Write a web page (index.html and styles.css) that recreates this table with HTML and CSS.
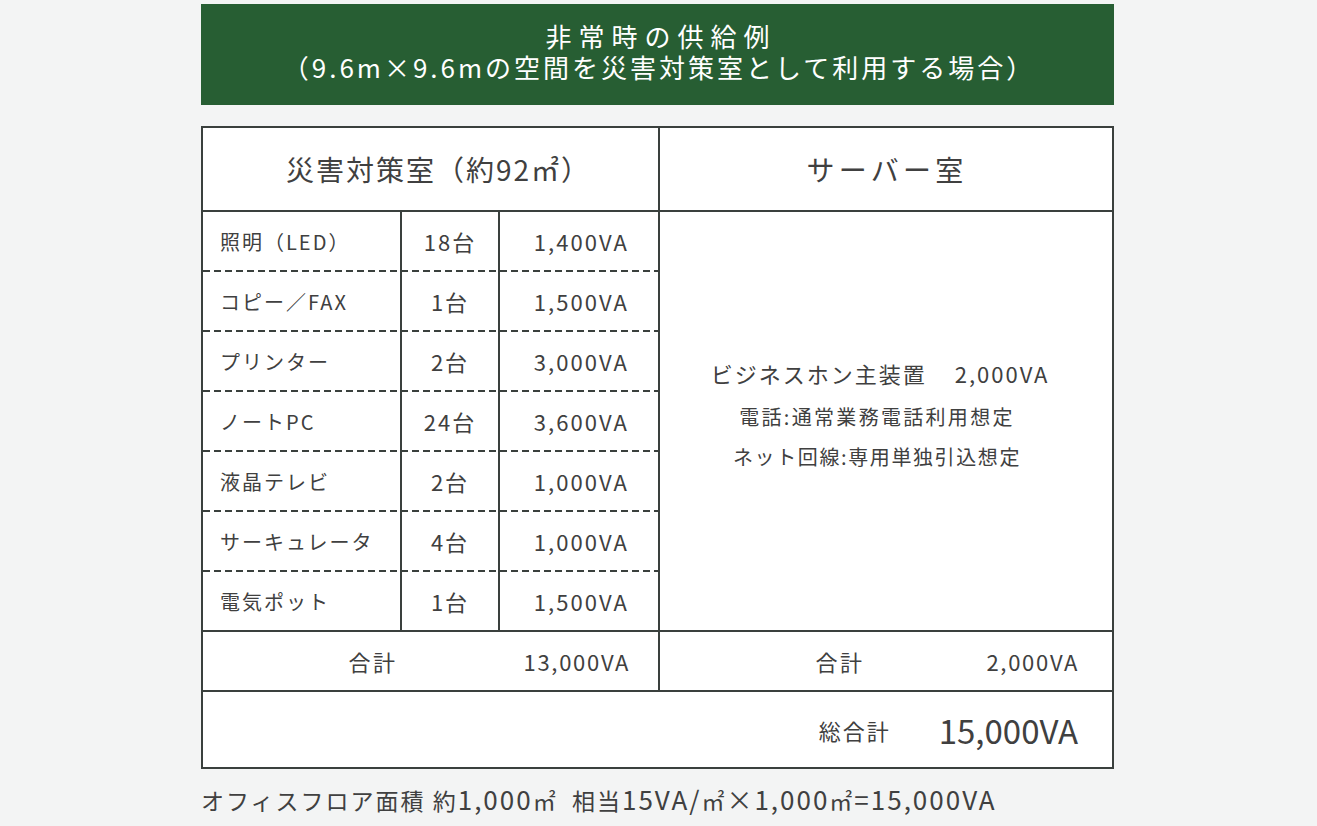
FILE: index.html
```html
<!DOCTYPE html>
<html lang="ja">
<head>
<meta charset="utf-8">
<title>非常時の供給例</title>
<link rel="stylesheet" href="styles.css">
</head>
<body>
<div class="page">
  <div class="banner">
    <p class="banner-title">非常時の供給例</p>
    <p class="banner-sub">（9.6m×9.6mの空間を災害対策室として利用する場合）</p>
  </div>

  <div class="table">
    <div class="sections">
      <div class="sec sec-left">
        <div class="sec-head sec-head-left">災害対策室（約92㎡）</div>
        <div class="items">
          <div class="item"><span class="c-name">照明（LED）</span><span class="c-qty">18台</span><span class="c-val">1,400VA</span></div>
          <div class="item"><span class="c-name">コピー／FAX</span><span class="c-qty">1台</span><span class="c-val">1,500VA</span></div>
          <div class="item"><span class="c-name">プリンター</span><span class="c-qty">2台</span><span class="c-val">3,000VA</span></div>
          <div class="item"><span class="c-name">ノートPC</span><span class="c-qty">24台</span><span class="c-val">3,600VA</span></div>
          <div class="item"><span class="c-name">液晶テレビ</span><span class="c-qty">2台</span><span class="c-val">1,000VA</span></div>
          <div class="item"><span class="c-name">サーキュレータ</span><span class="c-qty">4台</span><span class="c-val">1,000VA</span></div>
          <div class="item item-last"><span class="c-name">電気ポット</span><span class="c-qty">1台</span><span class="c-val">1,500VA</span></div>
        </div>
        <div class="subtotal subtotal-left"><span class="st-label">合計</span><span class="st-val">13,000VA</span></div>
      </div>

      <div class="sec sec-right">
        <div class="sec-head sec-head-right">サーバー室</div>
        <div class="server">
          <p class="server-main">ビジネスホン主装置<span class="server-va">2,000VA</span></p>
          <p class="server-note server-note-a">電話:通常業務電話利用想定</p>
          <p class="server-note server-note-b">ネット回線:専用単独引込想定</p>
        </div>
        <div class="subtotal subtotal-right"><span class="st-label">合計</span><span class="st-val">2,000VA</span></div>
      </div>
    </div>

    <div class="grand">
      <span class="grand-label">総合計</span>
      <span class="grand-val">15,000VA</span>
    </div>
  </div>

  <p class="note">オフィスフロア面積 約<span class="en">1,000</span>㎡&nbsp; 相当<span class="en">15VA/</span>㎡<span class="en">×1,000</span>㎡<span class="en">=15,000VA</span></p>
</div>
</body>
</html>
```

FILE: styles.css
```css
* {
  box-sizing: border-box;
}

html, body {
  margin: 0;
  padding: 0;
}

body {
  background: #f3f4f4;
  color: #404040;
  font-family: "Noto Sans CJK JP", "Noto Sans", sans-serif;
  font-weight: 400;
}

p {
  margin: 0;
}

.page {
  width: 913px;
  margin-left: 201px;
  padding-top: 4px;
}

/* ---------- banner ---------- */
.banner {
  background: #275e33;
  color: #ffffff;
  text-align: center;
  font-size: 26px;
  line-height: 31px;
  padding: 16px 0 23px;
}

.banner-title {
  letter-spacing: 7px;
  padding-left: 7px;
}

.banner-sub {
  letter-spacing: 3px;
  padding-left: 3px;
}

/* ---------- table ---------- */
.table {
  margin-top: 21px;
  border: 2px solid #3a403d;
  background: #ffffff;
}

.sections {
  display: grid;
  grid-template-columns: 457px 1fr;
  border-bottom: 2px solid #3a403d;
}

.sec {
  display: flex;
  flex-direction: column;
}

.sec-left {
  border-right: 2px solid #3a403d;
}

.sec-head {
  height: 84px;
  border-bottom: 2px solid #3a403d;
  display: flex;
  align-items: center;
  justify-content: center;
  font-size: 28px;
  padding-bottom: 1px;
}

.sec-head-left {
  letter-spacing: 2px;
  padding-left: 16px;
}

.sec-head-right {
  letter-spacing: 4.3px;
  padding-left: 2px;
}

/* ---------- item rows ---------- */
.items {
  border-bottom: 2px solid #3a403d;
}

.item {
  display: grid;
  grid-template-columns: 199px 98px 1fr;
  height: 60px;
  font-size: 20px;
  letter-spacing: 2px;
  background: repeating-linear-gradient(to right, #3a403d 0 7px, transparent 7px 11px) left bottom / 100% 2px no-repeat;
}

.item-last {
  height: 58px;
  background: none;
}

.item > span {
  display: flex;
  align-items: center;
  padding-bottom: 2px;
}

.item-last > span {
  padding-bottom: 0;
}

.c-name {
  padding-left: 17px;
  border-right: 2px solid #3a403d;
}

.c-qty {
  justify-content: center;
  border-right: 2px solid #3a403d;
  font-size: 22px;
}

.c-val {
  justify-content: flex-end;
  padding-right: 29px;
  font-size: 22px;
  letter-spacing: 2.1px;
}

/* ---------- sub totals ---------- */
.subtotal {
  height: 58px;
  display: flex;
  align-items: center;
  justify-content: flex-end;
}

.st-label {
  font-size: 22px;
  letter-spacing: 2.5px;
}

.st-val {
  font-size: 22px;
  letter-spacing: 1.7px;
}

.subtotal-left {
  padding-right: 28px;
  gap: 126px;
}

.subtotal-right {
  padding-right: 33px;
  gap: 122px;
}

/* ---------- server ---------- */
.server {
  flex: 1;
  border-bottom: 2px solid #3a403d;
  display: flex;
  flex-direction: column;
  align-items: center;
  justify-content: center;
  padding: 0 12px 16px 0;
  font-size: 20px;
  letter-spacing: 2px;
}

.server-main {
  font-size: 22px;
  line-height: 48px;
}

.server-va {
  margin-left: 28px;
}

.server-note {
  line-height: 40px;
}

.server-note-a {
  letter-spacing: 2.3px;
  padding-right: 6px;
}

.server-note-b {
  letter-spacing: 1.6px;
  padding-right: 6px;
}

/* ---------- grand total ---------- */
.grand {
  height: 75px;
  display: flex;
  align-items: center;
  justify-content: flex-end;
  padding-right: 34px;
  gap: 48px;
}

.grand-label {
  font-size: 22px;
  letter-spacing: 2px;
}

.grand-val {
  font-size: 33px;
  letter-spacing: 0;
}

/* ---------- note ---------- */
.note {
  margin-top: 13px;
  font-size: 23px;
  line-height: 34px;
  letter-spacing: 2px;
}

.note .en {
  font-size: 26px;
  letter-spacing: 2px;
}
```
